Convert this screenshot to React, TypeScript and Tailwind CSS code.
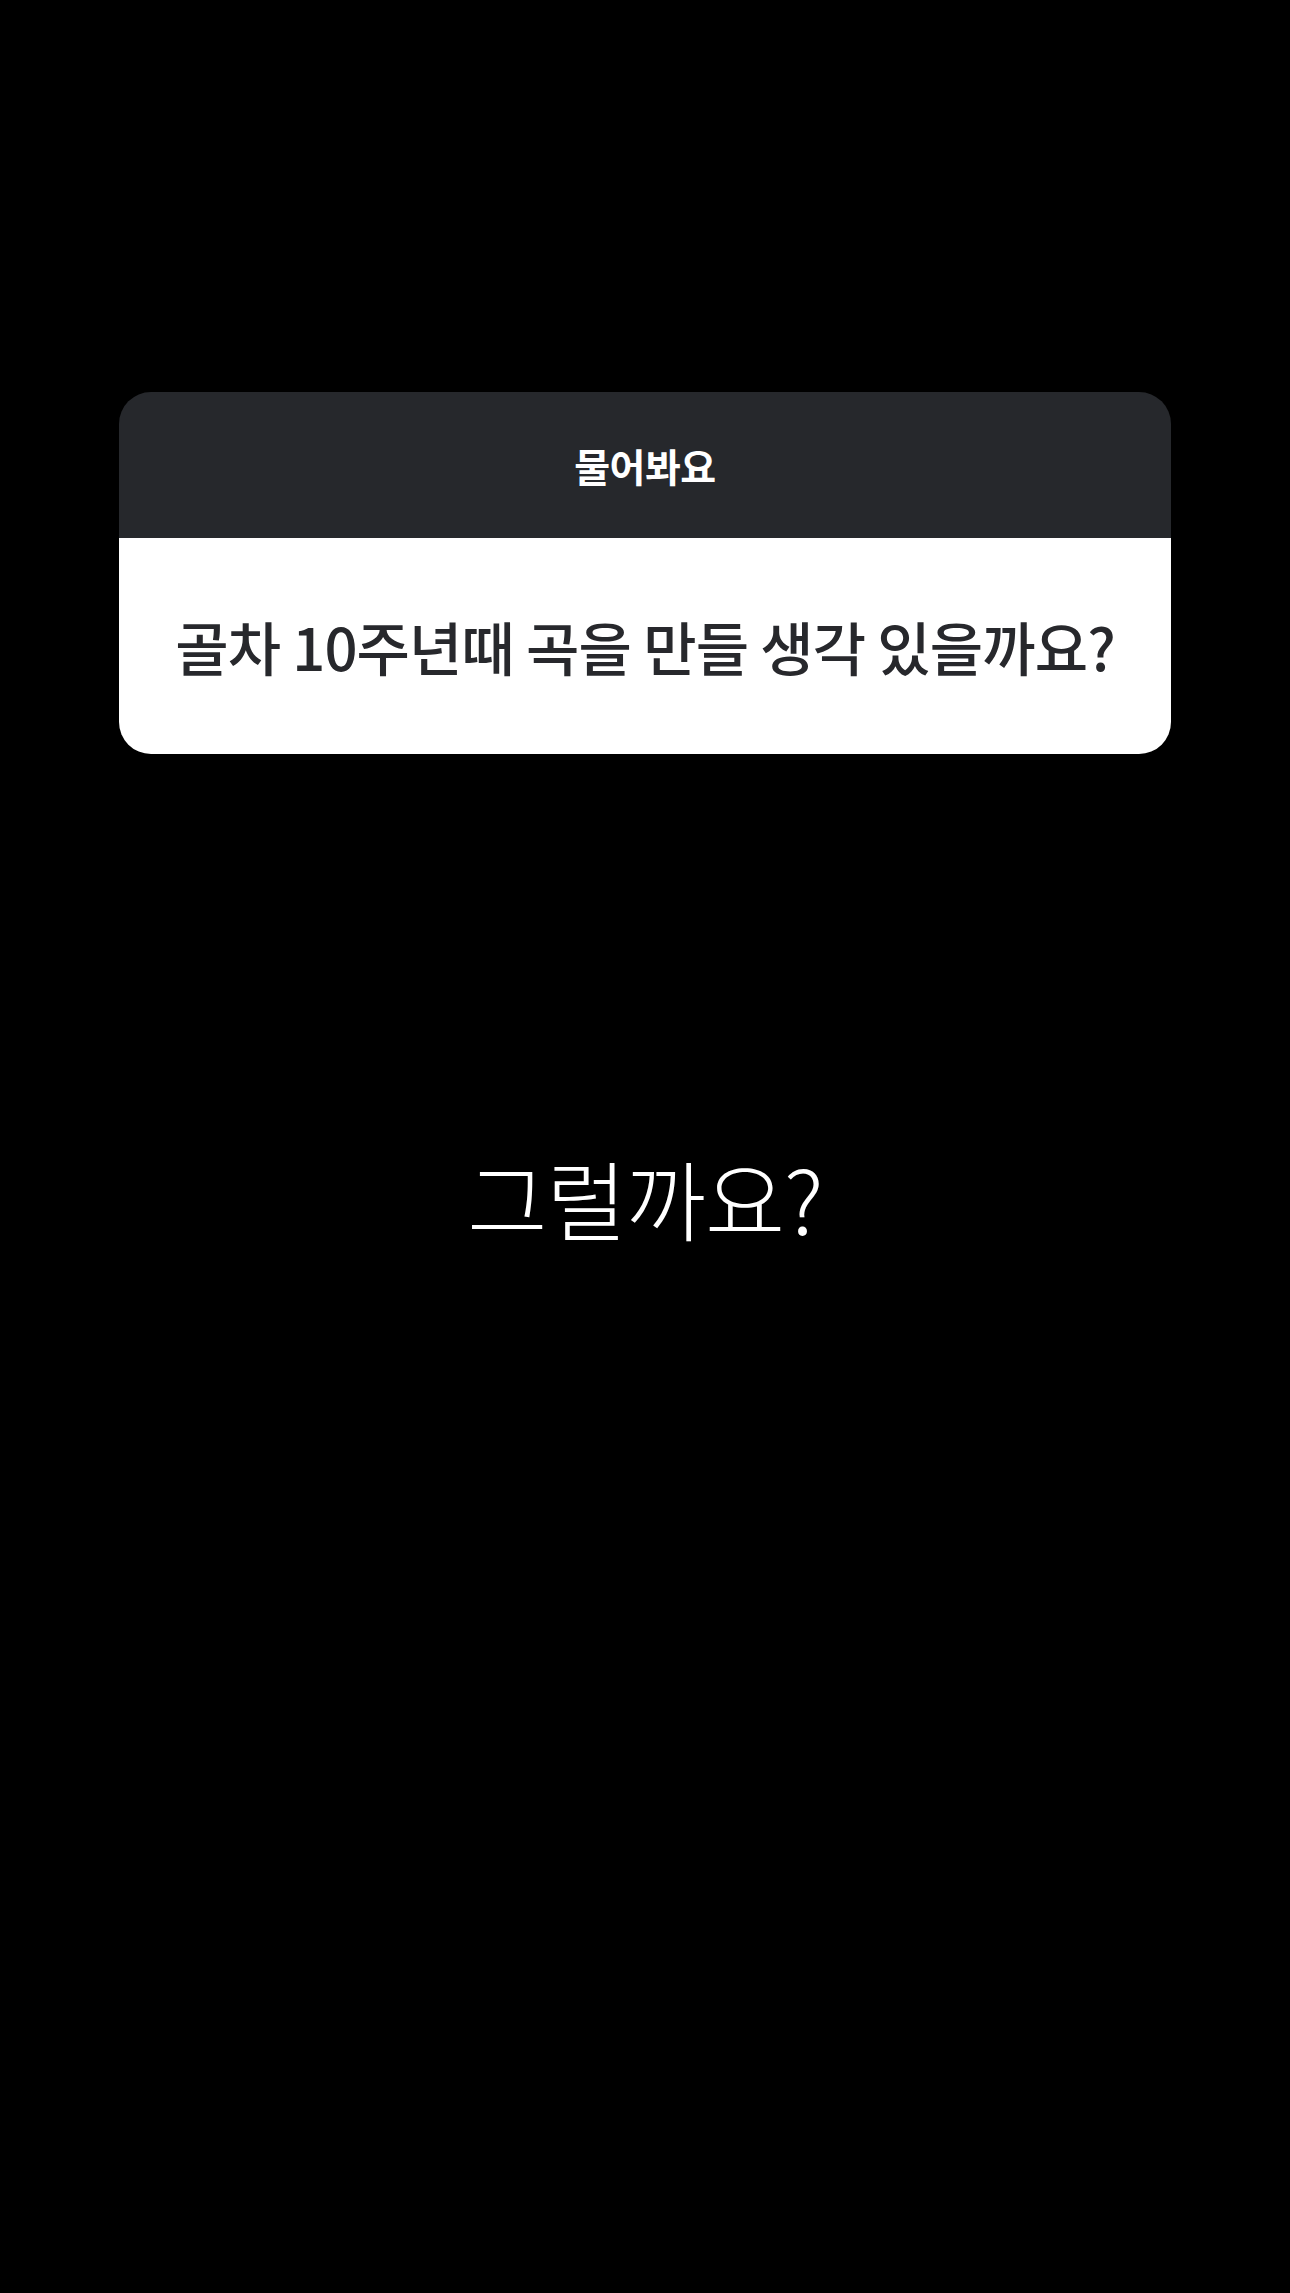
export default function App() {
  return (
    <div
      className="w-full h-[2293px] bg-black flex flex-col items-center pt-[392px]"
      style={{ fontFamily: '"Noto Sans CJK KR", "Noto Sans", sans-serif' }}
    >
      <div className="w-[1052px] rounded-[32px] overflow-hidden">
        <div className="h-[146px] bg-[#26282c] flex items-center justify-center">
          <span className="text-white text-[39px] font-semibold leading-none tracking-[-0.5px]">
            물어봐요
          </span>
        </div>
        <div className="h-[216px] bg-white flex items-center justify-center">
          <span className="text-[#27282c] text-[58px] font-medium leading-none tracking-[-0.9px]">
            골차 10주년때 곡을 만들 생각 있을까요?
          </span>
        </div>
      </div>

      <p className="mt-[400px] text-white text-[87px] font-light leading-none tracking-[-0.8px]">
        그럴까요?
      </p>
    </div>
  );
}
